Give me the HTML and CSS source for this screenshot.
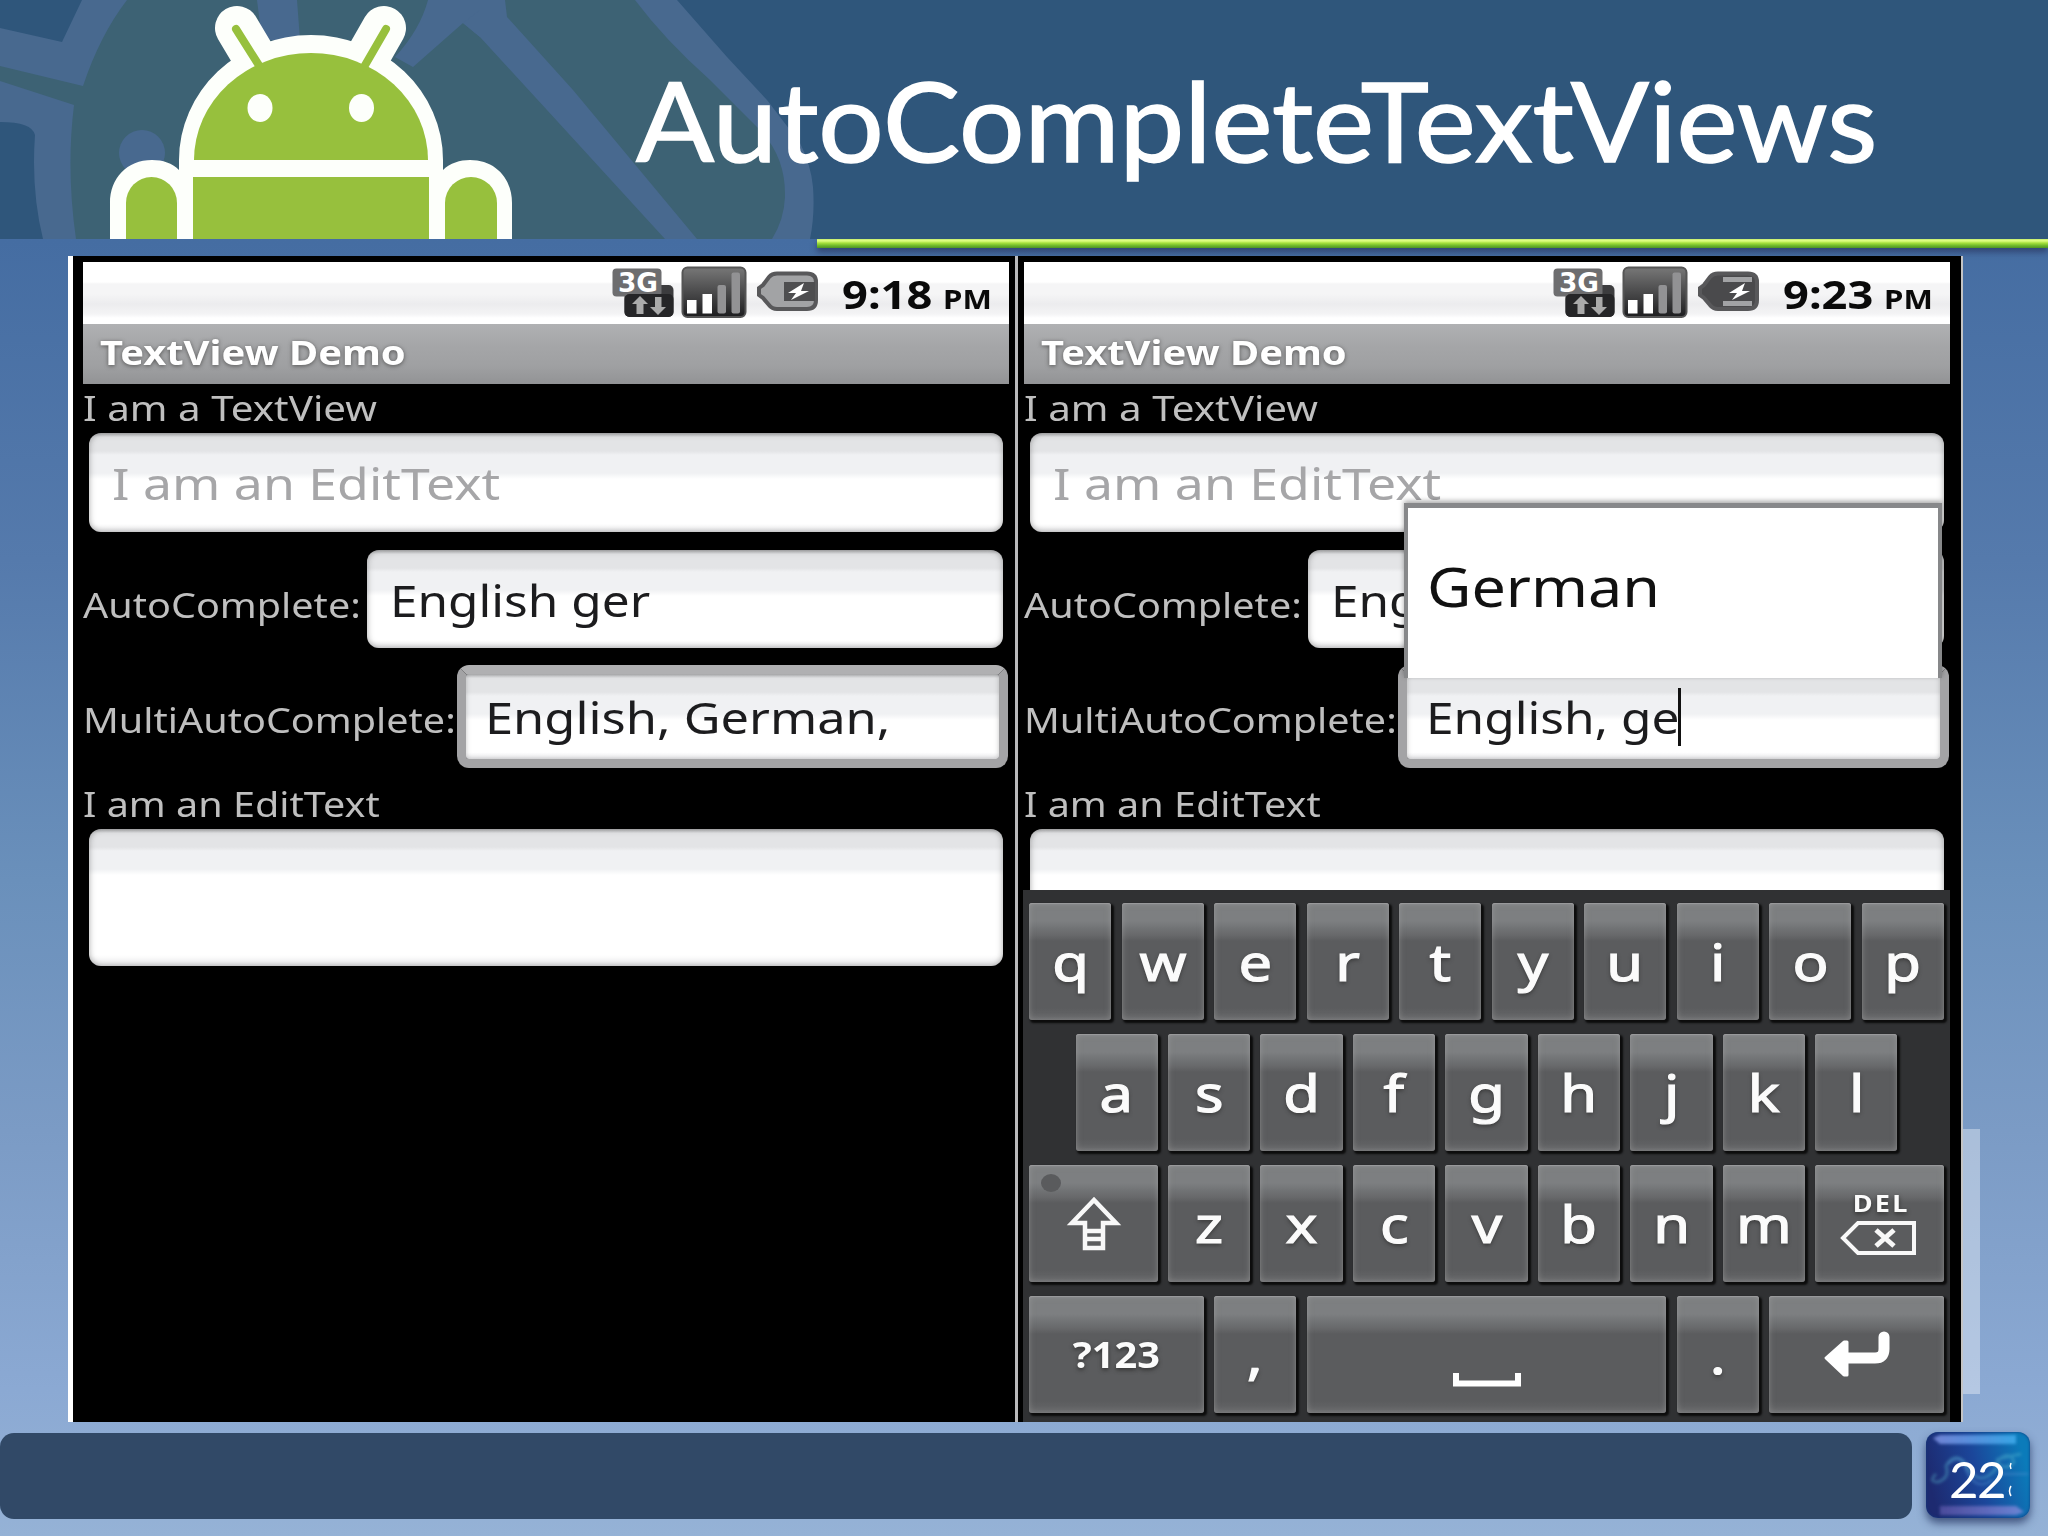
FILE: index.html
```
<!DOCTYPE html>
<html lang="en">
<head>
    <meta charset="UTF-8">
    <meta name="viewport" content="width=device-width, initial-scale=1.0">
    <title>AutoCompleteTextViews</title>
    <link rel="stylesheet" href="styles.css">
</head>
<body>
    <div class="slide">
        <div class="header">
            <svg class="watermark" width="820" height="239" viewBox="0 0 820 239">
                <path fill="#48698f" d="M82 0 L62 42 L0 28 V122 Q32 122 35 135 Q31 190 43 239 H810 Q815 215 813 187 Q811 165 800 143 L767 100 L727 57 L677 0 Z"/>
                <path fill="#3d6274" d="M127 0 Q100 35 83 86 L0 66 V81 L74 105 Q66 170 76 239 H665 L547 110 L480 37 L463 23 L413 67 L395 57 Q420 30 428 0 H297 L300 40 H262 L257 0 Z"/>
                <path fill="#3d6274" d="M505 0 H635 Q665 40 710 80 L757 127 Q786 155 785 197 Q784 220 772 239 H697 L573 90 L507 17 Z"/>
                <path fill="#48698f" d="M480 37 L463 23 L480 10 Z"/>
                <circle cx="142" cy="153" r="23" fill="#48698f"/>
            </svg>
            <svg class="robot" width="420" height="239" viewBox="100 0 420 239">
                <g fill="none" stroke="#fdfffb" stroke-width="44" stroke-linecap="round">
                    <path d="M237 28 L262 70"/>
                    <path d="M384 28 L360 70"/>
                </g>
                <path fill="#fdfffb" d="M179 170 V160 A132 125 0 0 1 443 160 V170 C450 163 460 160 470 160 C495 160 512 178 512 203 V239 H110 V203 C110 178 127 160 152 160 C163 160 172 163 179 170 Z"/>
                <g fill="#97c03d">
                    <path d="M194 160 A117 107 0 0 1 428 160 Z"/>
                    <rect x="193" y="177" width="236" height="62"/>
                    <path d="M126 239 V203 A25.500 26 0 0 1 177 203 V239 Z"/>
                    <path d="M445 239 V203 A26 26 0 0 1 497 203 V239 Z"/>
                </g>
                <g stroke="#97c03d" stroke-width="8" stroke-linecap="round">
                    <path d="M236 29 L260 67"/>
                    <path d="M386 29 L364 67"/>
                </g>
                <ellipse cx="260" cy="108" rx="12.500" ry="14" fill="#fdfffb"/>
                <ellipse cx="361.500" cy="108" rx="12.500" ry="14" fill="#fdfffb"/>
            </svg>
            <h1>AutoCompleteTextViews</h1>
        </div>
        <div class="rule"></div>

        <div class="screens">
            <div class="phone phone-left">
                <div class="status-bar">
                    <svg class="status-icons" width="210" height="56" viewBox="0 0 210 56">
                        <defs>
                            <linearGradient id="dark" x1="0" y1="0" x2="0" y2="1">
                                <stop offset="0" stop-color="#777"/>
                                <stop offset="1" stop-color="#1d1d1f"/>
                            </linearGradient>
                            <g id="network">
                                <rect x="14.500" y="21" width="49" height="32" rx="5" fill="#3c3c3e"/>
                                <rect x="2.500" y="4.500" width="49" height="28" rx="4" fill="#6d6d6f"/>
                                <rect x="14.500" y="30" width="49" height="23" rx="5" fill="#252527"/>
                                <text x="8" y="27.500" class="net-text" textLength="40" lengthAdjust="spacingAndGlyphs">3G</text>
                                <path fill="#aaa" d="M30 32 L38 40 H33.500 V50 H26.500 V40 H22 Z"/>
                                <path fill="#aaa" d="M48 51 L40 43 H45 V33 H51.500 V43 H56 Z"/>
                                <rect x="72.500" y="3.500" width="63" height="49.500" rx="5" fill="url(#dark)" stroke="#555" stroke-width="2"/>
                                <rect x="77" y="36" width="9.500" height="13.500" fill="#fff"/>
                                <rect x="92.500" y="30" width="9.500" height="19.500" fill="#fff"/>
                                <rect x="107.500" y="21" width="8.500" height="28.500" rx="2" fill="#929294"/>
                                <rect x="121.500" y="8.500" width="8.500" height="41" rx="2" fill="#929294"/>
                            </g>
                        </defs>
                        <use href="#network"/>
                        <path fill="#a2a3a5" stroke="#58585a" stroke-width="4" d="M149 24 L153 21 L159 13 Q162 9.500 167 9.500 H197 Q206 9.500 206 18 V36 Q206 45 197 45 H167 Q162 45 159 41 L153 34 L149 31 Z"/>
                        <rect x="174" y="18" width="31" height="19" fill="#4e4e50"/>
                        <path fill="#fff" d="M194 19 L178 29 H186 L181 36 L199 27 H191 Z"/>
                    </svg>
                    <span class="clock">9:18</span>
                    <span class="meridiem">PM</span>
                </div>
                <div class="title-bar"><span>TextView Demo</span></div>
                <div class="label label-first"><span class="wider">I am a TextView</span></div>
                <div class="field hint"><span>I am an EditText</span></div>
                <div class="row auto-row">
                    <div class="label"><span>AutoComplete:</span></div>
                    <div class="field"><span>English ger</span></div>
                </div>
                <div class="row multi-row">
                    <div class="label"><span>MultiAutoComplete:</span></div>
                    <div class="field focused"><span>English, German,</span></div>
                </div>
                <div class="label label-last"><span>I am an EditText</span></div>
                <div class="field tall"></div>
            </div>

            <div class="phone phone-right">
                <div class="status-bar">
                    <svg class="status-icons" width="210" height="56" viewBox="0 0 210 56">
                        <use href="#network"/>
                        <path fill="#4a4a4c" stroke="#58585a" stroke-width="4" d="M149 24 L153 21 L159 13 Q162 9.500 167 9.500 H197 Q206 9.500 206 18 V36 Q206 45 197 45 H167 Q162 45 159 41 L153 34 L149 31 Z"/>
                        <rect x="172" y="13" width="29" height="5" fill="#a2a3a5"/>
                        <rect x="172" y="37" width="29" height="5" fill="#a2a3a5"/>
                        <path fill="#fff" d="M194 19 L178 29 H186 L181 36 L199 27 H191 Z"/>
                    </svg>
                    <span class="clock">9:23</span>
                    <span class="meridiem">PM</span>
                </div>
                <div class="title-bar"><span>TextView Demo</span></div>
                <div class="label label-first"><span class="wider">I am a TextView</span></div>
                <div class="field hint"><span>I am an EditText</span></div>
                <div class="row auto-row">
                    <div class="label"><span>AutoComplete:</span></div>
                    <div class="field"><span>Eng</span></div>
                </div>
                <div class="row multi-row">
                    <div class="label"><span>MultiAutoComplete:</span></div>
                    <div class="field focused"><span class="typing">English, ge</span><i class="caret"></i></div>
                </div>
                <div class="label label-last"><span>I am an EditText</span></div>
                <div class="field tall"></div>

                <div class="dropdown"><span>German</span></div>

                <div class="keyboard">
                    <div class="keys">
                        <div class="key"><span>q</span></div>
                        <div class="key"><span>w</span></div>
                        <div class="key"><span>e</span></div>
                        <div class="key"><span>r</span></div>
                        <div class="key"><span>t</span></div>
                        <div class="key"><span>y</span></div>
                        <div class="key"><span>u</span></div>
                        <div class="key"><span>i</span></div>
                        <div class="key"><span>o</span></div>
                        <div class="key"><span>p</span></div>
                    </div>
                    <div class="keys">
                        <div class="key"><span>a</span></div>
                        <div class="key"><span>s</span></div>
                        <div class="key"><span>d</span></div>
                        <div class="key"><span>f</span></div>
                        <div class="key"><span>g</span></div>
                        <div class="key"><span>h</span></div>
                        <div class="key"><span>j</span></div>
                        <div class="key"><span>k</span></div>
                        <div class="key"><span>l</span></div>
                    </div>
                    <div class="keys">
                        <div class="key key-mid">
                            <svg width="128" height="117" viewBox="0 0 128 117">
                                <ellipse cx="22" cy="18" rx="10" ry="9" fill="#5a5b5d"/>
                                <path fill="none" stroke="#f8f8f8" stroke-width="4.500" d="M65 35 L43 58 H56 V66 H74 V58 H87 Z M56 66 V83 H74 V66 M56 74 H74"/>
                            </svg>
                        </div>
                        <div class="key"><span>z</span></div>
                        <div class="key"><span>x</span></div>
                        <div class="key"><span>c</span></div>
                        <div class="key"><span>v</span></div>
                        <div class="key"><span>b</span></div>
                        <div class="key"><span>n</span></div>
                        <div class="key"><span>m</span></div>
                        <div class="key key-mid key-del">
                            <span>DEL</span>
                            <svg width="80" height="38" viewBox="0 0 80 38">
                                <path fill="none" stroke="#f8f8f8" stroke-width="4" d="M4 18 L19 3 H75 V33 H19 Z"/>
                                <path stroke="#f8f8f8" stroke-width="5" d="M37 10 L55 26 M55 10 L37 26"/>
                            </svg>
                        </div>
                    </div>
                    <div class="keys">
                        <div class="key key-wide key-sym"><span>?123</span></div>
                        <div class="key"><span>,</span></div>
                        <div class="key key-space">
                            <svg width="72" height="117" viewBox="0 0 72 117">
                                <path fill="none" stroke="#fff" stroke-width="6" d="M5 77 V87.500 H67 V77"/>
                            </svg>
                        </div>
                        <div class="key"><span>.</span></div>
                        <div class="key key-wide">
                            <svg width="80" height="117" viewBox="0 0 80 117">
                                <path fill="none" stroke="#fff" stroke-width="11" stroke-linecap="round" d="M68 41 V53 Q68 62 59 62 H30"/>
                                <path fill="#fff" stroke="#fff" stroke-width="3" stroke-linejoin="round" d="M10 62 L28 46 H31 V79 H28 Z"/>
                            </svg>
                        </div>
                    </div>
                </div>
            </div>
            <div class="side-panel"></div>
        </div>

        <div class="footer">
            <div class="footer-bar"></div>
            <div class="badge">
                <svg width="104" height="86" viewBox="0 0 104 86">
                    <defs>
                        <linearGradient id="shineTop"><stop offset="0" stop-color="#8c9cf0"/><stop offset="1" stop-color="#46b4f4"/></linearGradient>
                        <linearGradient id="shineBottom"><stop offset="0" stop-color="#5a55a8"/><stop offset="1" stop-color="#8a8fe0"/></linearGradient>
                        <filter id="soft"><feGaussianBlur stdDeviation="1.500"/></filter>
                    </defs>
                    <g filter="url(#soft)">
                        <path fill="url(#shineTop)" opacity=".75" d="M7 6 L14 3 H90 V12 H14 Z"/>
                        <path fill="url(#shineBottom)" opacity=".75" d="M14 74 H90 L98 80 L90 83 H14 Z"/>
                        <path fill="none" stroke="#5fc6d8" stroke-width="3" opacity=".35" d="M10 42 Q2 50 12 50 Q24 46 20 34 Q28 20 38 30 Q50 52 62 44 Q74 36 72 28 Q84 18 88 30 Q80 40 70 30 M70 28 Q84 24 95 22"/>
                        <path fill="none" stroke="#4f8fd0" stroke-width="2" opacity=".5" d="M22 32 Q36 20 40 38 Q50 60 66 48 M76 42 H102"/>
                    </g>
                    <path fill="none" stroke="#fff" stroke-width="1.500" d="M85 31 Q83.500 34 85 37 M85 54 Q82 59 85 64"/>
                </svg>
                <span>22</span>
            </div>
        </div>
    </div>
</body>
</html>
```
FILE: styles.css
```
* {
    box-sizing: border-box;
}
body {
    margin: 0;
    font-family: "Noto Sans", "Open Sans", sans-serif;
}
.slide {
    width: 2048px;
    height: 1536px;
    overflow: hidden;
    background: linear-gradient(#436a9f 0, #456da2 240px, #557aac 560px, #6a90bb 880px, #7b9bc5 1130px, #8ba9d3 1390px, #95b2d6 1536px);
}

/* header */
.header {
    position: relative;
    display: flex;
    height: 239px;
    background: #2f567b;
}
.watermark {
    position: absolute;
    left: 0;
    top: 0;
}
.robot {
    position: relative;
    margin-left: 100px;
}
h1 {
    position: relative;
    margin: 0 0 0 116px;
    font: 400 110px/239px Lato, sans-serif;
    color: #fff;
    -webkit-text-stroke: 1.500px #fff;
    transform: scaleX(1.05);
    transform-origin: left;
}
.rule {
    height: 9px;
    margin: 0 0 8px 817px;
    background: linear-gradient(#c4ec6c, #e2ff85 20%, #a5e03c 45%, #6cb52a 75%, #4f9423);
    box-shadow: 0 4px 6px rgba(35, 40, 80, .6);
}

/* phones */
.screens {
    position: relative;
    display: flex;
    width: 1895px;
    height: 1166px;
    margin-left: 68px;
    border-left: 5px solid #fff;
    border-right: 2px solid #c4c4c4;
}
.phone {
    position: relative;
    height: 1166px;
    background: #000;
    overflow: hidden;
}
.phone-left {
    width: 942px;
    padding: 6px 6px 0 10px;
}
.phone-right {
    width: 946px;
    padding: 6px 11px 0 6px;
    border-left: 3px solid #b9b9bb;
}
.phone span {
    display: inline-block;
    transform-origin: left;
    white-space: nowrap;
}
.status-bar {
    display: flex;
    height: 62px;
    padding-left: 527px;
    align-items: baseline;
    line-height: 63px;
    font-weight: bold;
    color: #0a0a0a;
    background: linear-gradient(#fff 0 20px, #f5f5f6 22px 32px, #ececee 42px, #f4f4f5 52px, #fff 56px);
}
.status-icons {
    align-self: flex-start;
    margin-top: 2px;
}
.net-text {
    font: bold 26px "DejaVu Sans", sans-serif;
    fill: #fff;
}
.clock {
    width: 101px;
    margin-left: 22px;
    font-size: 39px;
    transform: scaleX(1.16);
}
.meridiem {
    font-size: 26px;
    transform: scaleX(1.2);
}
.title-bar {
    height: 60px;
    padding-left: 17px;
    font-size: 34px;
    font-weight: bold;
    line-height: 56px;
    color: #fff;
    text-shadow: 0 1px 4px #555;
    background: linear-gradient(#b0b1b3, #a5a6a8 35%, #9fa0a2 70%, #929395);
}
.title-bar span {
    transform: scaleX(1.173);
}
.label {
    font-size: 34px;
    color: #bfbfbf;
}
.label span {
    transform: scaleX(1.163);
}
.label .wider {
    transform: scaleX(1.187);
}
.label-first {
    height: 49px;
    line-height: 48px;
}
.label-last {
    height: 61px;
    padding-top: 5px;
    line-height: 62px;
}
.field {
    display: flex;
    height: 99px;
    border-radius: 12px;
    padding-left: 23px;
    font-size: 44px;
    line-height: 101px;
    color: #1c1c1e;
    background: linear-gradient(#b4b5b7, #e3e4e6 4px 18px, #f0f1f3 22px 40px, #fff 46px 92%, #ececee);
    box-shadow: inset 0 0 6px rgba(90, 90, 90, .55);
}
.field span {
    transform: scaleX(1.125);
}
.hint {
    margin: 0 6px 18px 6px;
    padding-left: 23px;
    color: #a6a6a8;
}
.hint span {
    transform: scaleX(1.176);
}
.row {
    display: flex;
}
.row .field {
    flex: 1;
}
.auto-row {
    height: 98px;
    margin: 0 6px 17px 0;
}
.auto-row .label {
    width: 284px;
    padding-top: 6px;
    line-height: 98px;
}
.auto-row .field {
    height: 98px;
}
.multi-row {
    height: 103px;
    margin-right: 1px;
}
.multi-row .label {
    width: 374px;
    padding-top: 4px;
    line-height: 103px;
}
.row .focused {
    height: 103px;
    padding-left: 19px;
    border: 9px solid #a3a3a5;
    border-top-color: #b0b0b2;
    line-height: 86px;
    background-clip: padding-box;
    background-color: #a3a3a5;
    box-shadow: inset 0 0 5px rgba(90, 90, 90, .35);
}
.focused span {
    transform: scaleX(1.149);
}
.focused .typing {
    transform: scaleX(1.127);
}
.caret {
    width: 3px;
    height: 58px;
    margin: 14px 0 0 27px;
    background: #111;
}
.tall {
    height: 137px;
    margin: 0 6px;
}
.dropdown {
    position: absolute;
    left: 386px;
    top: 247px;
    width: 538px;
    height: 175px;
    padding-left: 19px;
    border: solid #87888a;
    border-width: 5px 4px 0;
    font-size: 54px;
    line-height: 157px;
    color: #111;
    background: #fff;
    box-shadow: 0 -2px 5px rgba(0, 0, 0, .35);
}
.dropdown span {
    transform: scaleX(1.13);
}

/* keyboard */
.keyboard {
    position: absolute;
    left: 5px;
    bottom: 0;
    display: flex;
    flex-direction: column;
    gap: 14px;
    width: 927px;
    height: 532px;
    padding-top: 13px;
    background: #303133;
}
.keys {
    display: flex;
    justify-content: center;
    gap: 10.400px;
}
.key {
    display: flex;
    justify-content: center;
    width: 82.100px;
    height: 117px;
    border-radius: 3px;
    font-size: 51px;
    line-height: 117px;
    color: #fbfbfb;
    text-shadow: 0 2px 4px #333;
    -webkit-text-stroke: 1.200px #fbfbfb;
    background: linear-gradient(#7d7f81 0 18px, #707274 26px, #68696b 32px, #5b5c5e 38px 105px, #68696b);
    box-shadow: inset 0 0 6px rgba(170, 170, 170, .5), inset 0 1px 1px #97989a, 2px 2px 2px 1px #0c0c0c;
}
.key span {
    transform: scaleX(1.17);
    transform-origin: center;
}
.key-mid {
    width: 128.300px;
}
.key-wide {
    width: 174.600px;
}
.key-space {
    width: 359.600px;
}
.key-sym {
    font-size: 35px;
    font-weight: bold;
    -webkit-text-stroke: 0;
}
.key-sym span {
    transform: scaleX(1.136);
}
.key-del {
    flex-direction: column;
    align-items: center;
    justify-content: flex-start;
    padding-top: 21px;
    font-size: 24px;
    font-weight: bold;
    line-height: 34px;
    -webkit-text-stroke: 0;
}
.key-del span {
    margin-left: 4px;
    letter-spacing: 2px;
    transform: scaleX(1.13);
}
.key-del svg {
    margin-right: 2px;
}
.side-panel {
    position: absolute;
    left: 1890px;
    top: 873px;
    width: 17px;
    height: 265px;
    background: rgba(255, 255, 255, .36);
}

/* footer */
.footer {
    display: flex;
    gap: 14px;
    margin-top: 10px;
}
.footer-bar {
    width: 1912px;
    height: 86px;
    margin-top: 1px;
    border-radius: 14px;
    background: #314967;
}
.badge {
    position: relative;
    width: 104px;
    height: 86px;
    border-radius: 12px;
    background: linear-gradient(75deg, #1d2a70 10%, #1b469a 50%, #0b7bba 90%);
    box-shadow: 0 5px 9px rgba(30, 45, 90, .7), inset 0 0 3px #123a7c;
}
.badge span {
    position: absolute;
    left: 23px;
    top: 17px;
    font: 51px/60px Lato, sans-serif;
    letter-spacing: -1.500px;
    color: #fff;
}
```
